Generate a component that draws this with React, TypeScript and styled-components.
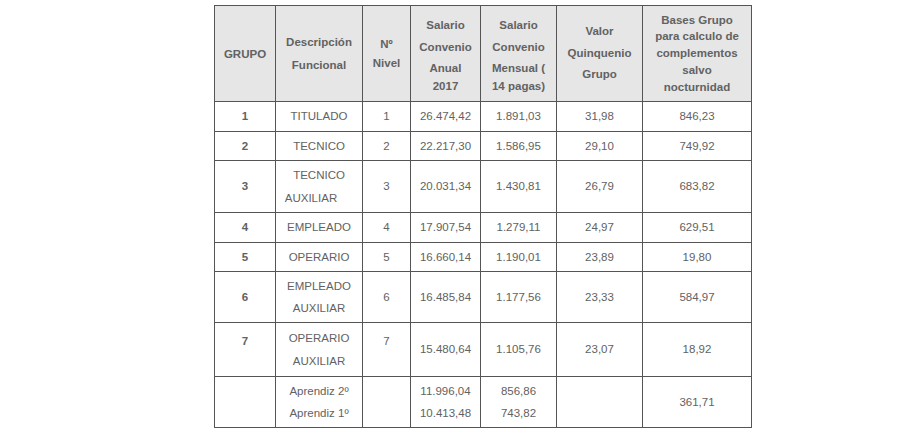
import React from "react";
import styled, { createGlobalStyle } from "styled-components";

const Global = createGlobalStyle`
  html, body { margin: 0; padding: 0; background: #ffffff; }
  body { font-family: "Liberation Sans", Arial, sans-serif; }
`;

const Page = styled.div`
  width: 900px;
  height: 434px;
  padding: 5px 0 0 214px;
  box-sizing: border-box;
  overflow: hidden;
`;

const Table = styled.table`
  border-collapse: collapse;
  table-layout: fixed;
  width: 537px;
  font-family: "Liberation Sans", Arial, sans-serif;
  font-size: 11.5px;
  color: #666666;
`;

const HeadCell = styled.th<{ $lh?: number }>`
  background: #e6e6e6;
  border: 1px solid #555555;
  font-weight: bold;
  color: #626262;
  text-align: center;
  vertical-align: middle;
  padding: 0 2px;
  height: 96px;
  line-height: ${(p) => p.$lh ?? 22}px;
  box-sizing: border-box;
`;

const Line = styled.span<{ $lh?: number }>`
  display: block;
  line-height: ${(p) => (p.$lh ? `${p.$lh}px` : "inherit")};
`;

const Row = styled.tr<{ $h: number }>`
  height: ${(p) => p.$h}px;
`;

const Cell = styled.td<{ $lift?: boolean; $bold?: boolean }>`
  border: 1px solid #555555;
  text-align: center;
  vertical-align: middle;
  padding: 0 2px ${(p) => (p.$lift ? "16px" : "0")};
  line-height: 22.5px;
  color: #626262;
  font-weight: ${(p) => (p.$bold ? "bold" : "normal")};
  box-sizing: border-box;
`;

const Shifted = styled.span`
  display: inline-block;
  margin-right: 16px;
`;

type RowData = {
  h: number;
  g: string;
  d: React.ReactNode;
  n: string;
  a: React.ReactNode;
  m: React.ReactNode;
  q: string;
  b: string;
  lift?: boolean;
};

const rows: RowData[] = [
  { h: 30, g: "1", d: "TITULADO", n: "1", a: "26.474,42", m: "1.891,03", q: "31,98", b: "846,23" },
  { h: 29, g: "2", d: "TECNICO", n: "2", a: "22.217,30", m: "1.586,95", q: "29,10", b: "749,92" },
  {
    h: 52,
    g: "3",
    d: (
      <>
        <Line>TECNICO</Line>
        <Line>
          <Shifted>AUXILIAR</Shifted>
        </Line>
      </>
    ),
    n: "3",
    a: "20.031,34",
    m: "1.430,81",
    q: "26,79",
    b: "683,82",
  },
  { h: 30, g: "4", d: "EMPLEADO", n: "4", a: "17.907,54", m: "1.279,11", q: "24,97", b: "629,51" },
  { h: 29, g: "5", d: "OPERARIO", n: "5", a: "16.660,14", m: "1.190,01", q: "23,89", b: "19,80" },
  {
    h: 51,
    g: "6",
    d: (
      <>
        <Line>EMPLEADO</Line>
        <Line>AUXILIAR</Line>
      </>
    ),
    n: "6",
    a: "16.485,84",
    m: "1.177,56",
    q: "23,33",
    b: "584,97",
  },
  {
    h: 54,
    g: "7",
    d: (
      <>
        <Line>OPERARIO</Line>
        <Line>AUXILIAR</Line>
      </>
    ),
    n: "7",
    a: "15.480,64",
    m: "1.105,76",
    q: "23,07",
    b: "18,92",
    lift: true,
  },
  {
    h: 51,
    g: "",
    d: (
      <>
        <Line>Aprendiz 2º</Line>
        <Line>Aprendiz 1º</Line>
      </>
    ),
    n: "",
    a: (
      <>
        <Line>11.996,04</Line>
        <Line>10.413,48</Line>
      </>
    ),
    m: (
      <>
        <Line>856,86</Line>
        <Line>743,82</Line>
      </>
    ),
    q: "",
    b: "361,71",
  },
];

export default function App() {
  return (
    <>
      <Global />
      <Page>
        <Table>
          <colgroup>
            <col style={{ width: 61 }} />
            <col style={{ width: 87 }} />
            <col style={{ width: 48 }} />
            <col style={{ width: 70 }} />
            <col style={{ width: 76 }} />
            <col style={{ width: 86 }} />
            <col style={{ width: 109 }} />
          </colgroup>
          <thead>
            <tr>
              <HeadCell>GRUPO</HeadCell>
              <HeadCell $lh={23}>
                <Line>Descripción</Line>
                <Line>Funcional</Line>
              </HeadCell>
              <HeadCell $lh={19}>
                <Line>Nº</Line>
                <Line>Nivel</Line>
              </HeadCell>
              <HeadCell $lh={22}>
                <Line>Salario</Line>
                <Line>Convenio</Line>
                <Line $lh={20}>Anual</Line>
                <Line $lh={16}>2017</Line>
              </HeadCell>
              <HeadCell $lh={22}>
                <Line>Salario</Line>
                <Line>Convenio</Line>
                <Line $lh={20}>Mensual (</Line>
                <Line $lh={16}>14 pagas)</Line>
              </HeadCell>
              <HeadCell $lh={21.5}>
                <Line>Valor</Line>
                <Line>Quinquenio</Line>
                <Line>Grupo</Line>
              </HeadCell>
              <HeadCell $lh={16.7}>
                <Line>Bases Grupo</Line>
                <Line>para calculo de</Line>
                <Line>complementos</Line>
                <Line>salvo</Line>
                <Line>nocturnidad</Line>
              </HeadCell>
            </tr>
          </thead>
          <tbody>
            {rows.map((r, i) => (
              <Row key={i} $h={r.h}>
                <Cell $lift={r.lift} $bold>
                  {r.g}
                </Cell>
                <Cell>{r.d}</Cell>
                <Cell $lift={r.lift}>{r.n}</Cell>
                <Cell>{r.a}</Cell>
                <Cell>{r.m}</Cell>
                <Cell>{r.q}</Cell>
                <Cell>{r.b}</Cell>
              </Row>
            ))}
          </tbody>
        </Table>
      </Page>
    </>
  );
}
